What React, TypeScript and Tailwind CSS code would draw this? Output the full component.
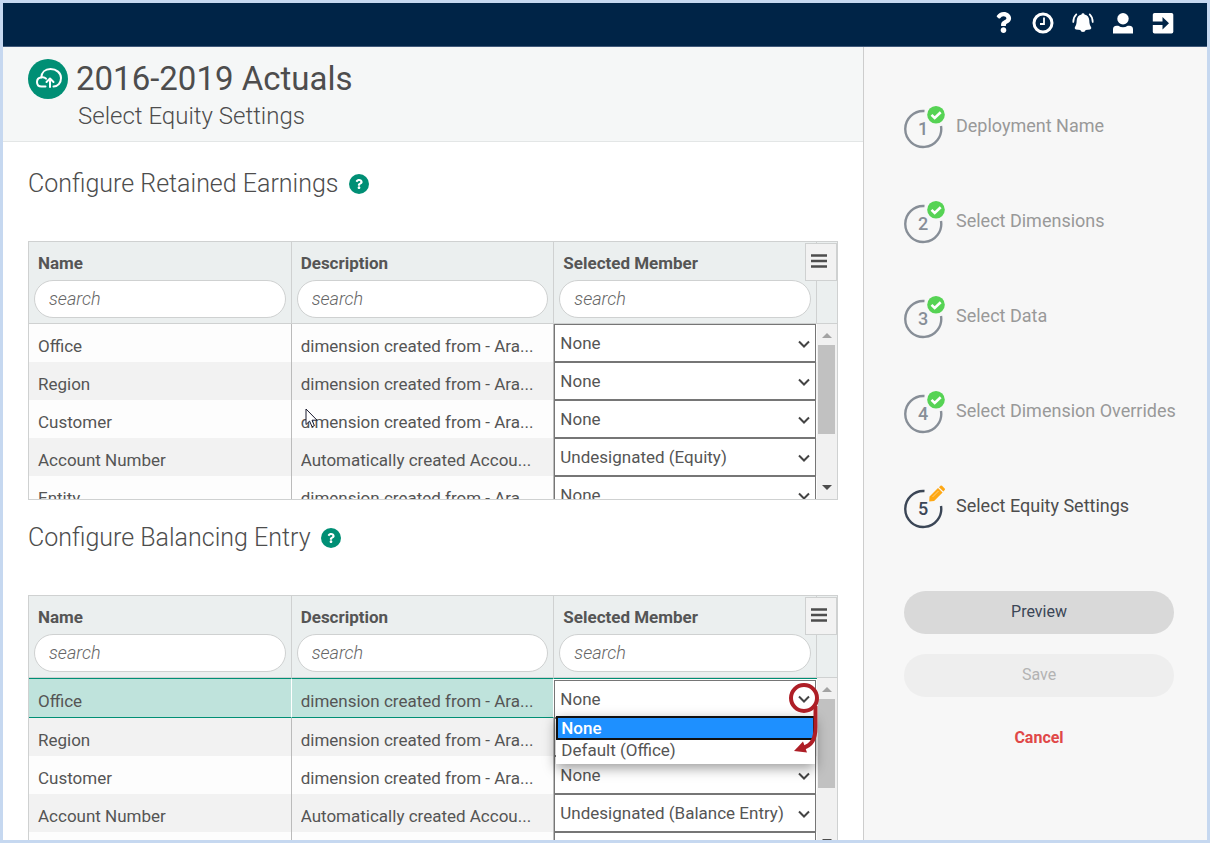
import type React from "react";
import { useState } from "react";
import { FaQuestion } from "react-icons/fa";

type Member = {
  name: string;
  description: string;
  member: string;
};

const FROM_SOURCE = "dimension created from - Ara...";

const retainedEarnings: Member[] = [
  { name: "Office", description: FROM_SOURCE, member: "None" },
  { name: "Region", description: FROM_SOURCE, member: "None" },
  { name: "Customer", description: FROM_SOURCE, member: "None" },
  {
    name: "Account Number",
    description: "Automatically created Accou...",
    member: "Undesignated (Equity)",
  },
  { name: "Entity", description: FROM_SOURCE, member: "None" },
];

const balancingEntry: Member[] = [
  { name: "Office", description: FROM_SOURCE, member: "None" },
  { name: "Region", description: FROM_SOURCE, member: "None" },
  { name: "Customer", description: FROM_SOURCE, member: "None" },
  {
    name: "Account Number",
    description: "Automatically created Accou...",
    member: "Undesignated (Balance Entry)",
  },
  { name: "Entity", description: FROM_SOURCE, member: "None" },
];

const steps = [
  "Deployment Name",
  "Select Dimensions",
  "Select Data",
  "Select Dimension Overrides",
  "Select Equity Settings",
];

const columns = ["Name", "Description", "Selected Member"];

const ClockIcon = () => (
  <svg viewBox="0 0 22 22" className="size-[22px]" fill="none" stroke="currentColor">
    <circle cx="11" cy="11" r="9" strokeWidth="3" />
    <path d="M12 5.5V12H8" strokeWidth="1.8" />
  </svg>
);

const BellIcon = () => (
  <svg viewBox="0 0 22 22" className="size-[22px]" fill="currentColor">
    <path d="M11 1.200a1.500 1.500 0 0 1 1.500 1.400C15.600 3.200 17.200 5.600 17.300 8.600c.1 3.600.7 5 1.700 6.500.6.900.2 2.100-.9 2.400l-4.400.5a2.800 2.800 0 0 1-5.400 0l-4.400-.5c-1.100-.3-1.500-1.500-.9-2.400 1-1.500 1.600-2.900 1.700-6.500.1-3 1.700-5.400 4.800-6A1.500 1.500 0 0 1 11 1.200z" />
    <path
      d="M1.300 10C1.300 6.500 2.400 4.200 4.300 2.400M20.700 10C20.700 6.500 19.600 4.200 17.700 2.400"
      fill="none"
      stroke="currentColor"
      strokeWidth="1.700"
      strokeLinecap="round"
    />
  </svg>
);

const UserIcon = () => (
  <svg viewBox="0 0 22 22" className="size-[22px]" fill="currentColor">
    <circle cx="11" cy="6.800" r="5.700" />
    <path d="M1 21.500v-4.200a3.600 3.600 0 0 1 3.600-3.600h1.700a8.500 8.500 0 0 0 9.400 0h1.700a3.600 3.600 0 0 1 3.600 3.600v4.200z" />
  </svg>
);

const SignOutIcon = () => (
  <svg viewBox="0 0 22 22" className="size-[22px]">
    <rect x="0.800" y="1" width="20.500" height="20.500" rx="1.700" fill="currentColor" />
    <path d="M0 9.500h10.500V5L17 11.200l-6.500 6.200v-4.500H0z" fill="#002447" />
  </svg>
);

const CloudUploadIcon = () => (
  <svg
    viewBox="0 0 40 40"
    className="size-10 shrink-0"
    fill="none"
    stroke="white"
    strokeWidth="2"
    strokeLinecap="round"
    strokeLinejoin="round"
  >
    <circle cx="20" cy="20" r="20" fill="#008f75" stroke="none" />
    <path d="M17.500 27.500H13.500C10.800 27.500 9 25.600 9 23c0-2.600 1.900-4.400 4.300-4.600C13.500 13.500 17 10 22.500 10c6 0 10.500 4 10.500 9 0 5-3.200 8.500-7.500 8.500" />
    <path d="M13.300 18.300c2-.4 3.700.2 4.700 1.400" />
    <path d="M22 28V20M18.500 23l3.500-3.500 3.500 3.500" />
  </svg>
);

const MenuIcon = () => (
  <svg viewBox="0 0 16 14" className="h-[14px] w-4" stroke="#4d4d4d" strokeWidth="2.500">
    <path d="M0 1.500h16M0 7h16M0 12.500h16" />
  </svg>
);

const HelpBadge = () => (
  <button
    type="button"
    aria-label="Help"
    className="flex size-5 items-center justify-center rounded-full bg-[#008f75] text-white"
  >
    <FaQuestion size={10} />
  </button>
);

const Cursor = () => (
  <svg viewBox="0 0 13 20" className="absolute top-2 left-[13px] z-10 h-5 w-[13px]">
    <path
      d="M1 1v15.500l3.600-3.400 2.400 5.600 2.400-1-2.400-5.500H12z"
      fill="white"
      stroke="#1a1a2e"
      strokeWidth="1"
    />
  </svg>
);

// Circles the drop-down arrow and points at the second option
const Annotation = () => (
  <svg
    viewBox="0 0 34 74"
    className="pointer-events-none absolute top-[2px] right-[-3px] z-30 h-[74px] w-[34px]"
    fill="none"
    stroke="#ae1e26"
    strokeWidth="4"
  >
    <circle cx="18" cy="17" r="13" />
    <path d="M29.500 25V46C29.500 58 26 64 17 67" />
    <path d="M8 70 17 60.500 21 71.500z" fill="#ae1e26" stroke="none" />
  </svg>
);

const OptionList = () => (
  <ul
    role="listbox"
    aria-label="Office members"
    className="absolute top-[37px] right-[2px] left-[2px] z-20 bg-white text-[17px] leading-5 text-[#555] shadow-[0_4px_12px_rgba(0,0,0,0.4)]"
  >
    <li
      role="option"
      aria-selected="true"
      className="border-2 border-[#101010] bg-[#1e90ff] px-[3px] font-medium text-white"
    >
      None
    </li>
    <li role="option" aria-selected="false" className="px-[5px] pb-1">
      Default (Office)
    </li>
  </ul>
);

const MemberSelect: React.FC<{ row: Member; label: string }> = ({ row, label }) => {
  const [value, setValue] = useState(row.member);

  return (
    <>
      <select
        aria-label={label}
        value={value}
        onChange={(e) => setValue(e.target.value)}
        className="block h-[38px] w-full appearance-none border border-[#767676] bg-white pl-[5px] leading-9 text-[#555]"
      >
        <option>{row.member}</option>
        <option>Default ({row.name})</option>
      </select>
      <svg
        viewBox="0 0 12 8"
        className="pointer-events-none absolute top-4 right-[7px] h-2 w-3"
        fill="none"
        stroke="#444"
        strokeWidth="2"
      >
        <path d="M1 1.500 6 6.500l5-5" />
      </svg>
    </>
  );
};

const ScrollBar = () => (
  <div className="flex w-5 shrink-0 flex-col">
    <div className="h-[82px] border-b border-[#cfd1d1] bg-[#ebefef]" />
    <div className="flex h-[175px] flex-col items-center bg-[#f1f1f1] pr-px">
      <svg viewBox="0 0 10 5" className="mt-[9px] h-[5px] w-[10px]" fill="#a3a3a3">
        <path d="M0 5 5 0l5 5z" />
      </svg>
      <div className="mt-[7px] h-[89px] w-[17px] bg-[#c1c1c1]" />
      <svg viewBox="0 0 10 5" className="mt-auto mb-[9px] h-[5px] w-[10px]" fill="#4d4d4d">
        <path d="M0 0h10L5 5z" />
      </svg>
    </div>
  </div>
);

type SectionProps = {
  title: string;
  rows: Member[];
  openRow?: number;
  cursorRow?: number;
};

const SettingsSection: React.FC<SectionProps> = ({ title, rows, openRow, cursorRow }) => (
  <section className="mb-[22px] px-[25px]">
    <div className="mb-[41px] flex h-8 items-center gap-[10px]">
      <h2 className="text-[25px] leading-8 font-light text-[#4d4d4d]">{title}</h2>
      <HelpBadge />
    </div>

    <div className="relative flex h-[259px] overflow-hidden border border-[#cfd1d1]">
      <table className="h-fit w-full min-w-0 flex-1 table-fixed border-separate border-spacing-0 text-left text-[17px] text-[#555]">
        <thead>
          <tr>
            {columns.map((column) => (
              <th
                key={column}
                className="h-[82px] w-1/3 border-r border-b border-[#cfd1d1] bg-[#ebefef] px-[5px] pt-[9px] pb-[5px] align-top leading-6 font-bold"
              >
                <span className="block pl-1">{column}</span>
                <input
                  type="text"
                  placeholder="search"
                  aria-label={`Search ${column}`}
                  className="mt-[5px] block h-[38px] w-full rounded-full border border-[#cfd1d1] bg-white px-[14px] pb-px text-lg font-light italic placeholder:text-[#666]"
                />
              </th>
            ))}
          </tr>
        </thead>
        <tbody>
          {rows.map((row, index) => {
            const open = index === openRow;
            const cell = open
              ? "h-10 border-y border-y-[#008f75] border-r border-r-white bg-[#bfe3dc] pt-[5px]"
              : "h-[38px] border-r border-[#bbb] pt-[5px]";
            return (
              <tr key={row.name} className={index % 2 ? "bg-[#f2f2f2]" : "bg-[#fdfdfd]"}>
                <td className={`truncate pb-0 pl-[9px] leading-6 ${cell}`}>{row.name}</td>
                <td className={`relative pb-0 pl-[9px] leading-6 ${cell}`}>
                  <span className="block truncate">{row.description}</span>
                  {index === cursorRow && <Cursor />}
                </td>
                <td className={`relative p-0 pr-px ${open ? "border-t border-[#008f75]" : ""}`}>
                  <MemberSelect row={row} label={`${title}: ${row.name}`} />
                  {open && <OptionList />}
                  {open && <Annotation />}
                </td>
              </tr>
            );
          })}
        </tbody>
      </table>
      <ScrollBar />
      <button
        type="button"
        aria-label="Column menu"
        className="absolute top-px right-0 flex h-[38px] w-8 items-center justify-center border border-[#cfd1d1] bg-[#f2f2f2] pr-1 pb-[3px]"
      >
        <MenuIcon />
      </button>
    </div>
  </section>
);

const StepBadge: React.FC<{ step: number; done: boolean }> = ({ step, done }) => (
  <svg viewBox="0 0 44 44" className="size-11 shrink-0">
    <path
      d="M20.500 6A18 18 0 1 0 37 21"
      fill="none"
      stroke={done ? "#878e97" : "#3b4656"}
      strokeWidth="2.400"
    />
    <text
      x="19"
      y="30"
      textAnchor="middle"
      fontSize="18"
      fontWeight="500"
      fill={done ? "#878e97" : "#3b4656"}
    >
      {step}
    </text>
    {done ? (
      <>
        <circle cx="32" cy="9.800" r="8.800" fill="#56d354" />
        <path d="m27.500 9.800 3.200 3.200 6-5.700" fill="none" stroke="white" strokeWidth="2.600" />
      </>
    ) : (
      <>
        <path
          d="M25.500 11.500 34 3l4.600 4.600-8.500 8.500-4.900.4zM35 2.200l1.400-1.400q.8-.8 1.600 0l2.700 2.700q.8.800 0 1.600l-1.300 1.400z"
          fill="#fea815"
        />
        <path d="m28.500 12 6-6" stroke="#fed080" strokeWidth="1" />
      </>
    )}
  </svg>
);

const Sidebar = () => (
  <aside className="w-[344px] shrink-0 border-l border-[#cdcdcd] bg-[#f7f7f7] pr-[33px] pl-10">
    <ol className="flex flex-col gap-[51px] pt-[58px]">
      {steps.map((step, index) => {
        const done = index < steps.length - 1;
        return (
          <li key={step} className="flex h-11 gap-2">
            <StepBadge step={index + 1} done={done} />
            <span
              className={`pt-[9px] text-lg leading-6 whitespace-nowrap ${done ? "text-[#999]" : "text-[#4d4d4d]"}`}
            >
              {step}
            </span>
          </li>
        );
      })}
    </ol>
    <div className="mt-[62px] flex flex-col gap-5 text-base">
      <button type="button" className="h-[43px] rounded-full bg-[#d9d9d9] pb-px text-[#3b4656]">
        Preview
      </button>
      <button
        type="button"
        disabled
        className="h-[43px] rounded-full bg-[#eee] pb-px text-[#b3b3b3]"
      >
        Save
      </button>
      <button type="button" className="h-[43px] pb-px font-bold text-[#e04848]">
        Cancel
      </button>
    </div>
  </aside>
);

const App: React.FC = () => {
  return (
    <div className="flex h-screen flex-col overflow-hidden border-[3px] border-[#c6d8f0] bg-white font-[Roboto,sans-serif]">
      <header className="flex h-11 shrink-0 items-center justify-end gap-[18px] border-b border-[#40597a] bg-[#002447] pr-[33px] pb-1 text-white">
        <button type="button" aria-label="Help" className="flex w-[22px] justify-center">
          <FaQuestion size={21} />
        </button>
        <button type="button" aria-label="History">
          <ClockIcon />
        </button>
        <button type="button" aria-label="Notifications">
          <BellIcon />
        </button>
        <button type="button" aria-label="Account">
          <UserIcon />
        </button>
        <button type="button" aria-label="Sign out">
          <SignOutIcon />
        </button>
      </header>

      <div className="flex min-h-0 flex-1">
        <main className="min-w-0 flex-1 overflow-hidden">
          {/* Page title */}
          <div className="mb-[26px] flex h-[95px] gap-2 border-b border-[#e3e6e6] bg-[#f5f7f7] pt-3 pl-[25px]">
            <CloudUploadIcon />
            <div className="text-[#4d4d4d]">
              <h1 className="text-[33px] leading-10">2016-2019 Actuals</h1>
              <p className="pt-px pl-[2px] text-2xl leading-8 font-light">Select Equity Settings</p>
            </div>
          </div>

          <SettingsSection title="Configure Retained Earnings" rows={retainedEarnings} cursorRow={2} />
          <SettingsSection title="Configure Balancing Entry" rows={balancingEntry} openRow={0} />
        </main>
        <Sidebar />
      </div>
    </div>
  );
};

export default App;
